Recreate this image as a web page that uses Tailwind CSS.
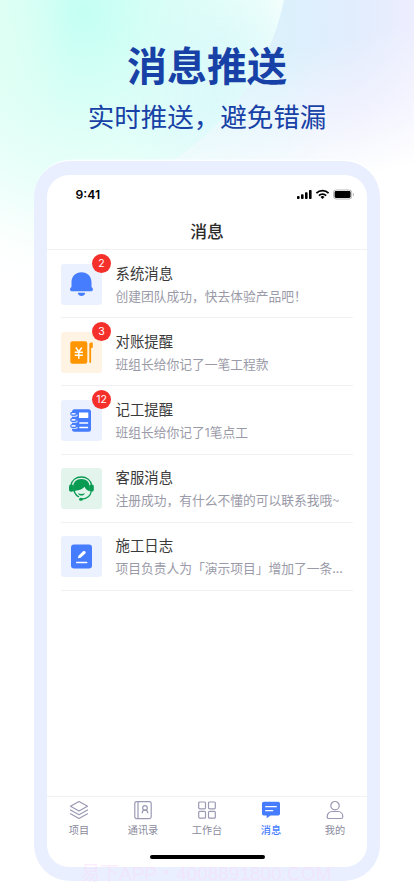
<!DOCTYPE html>
<html lang="zh-CN">
<head>
<meta charset="utf-8">
<title>消息推送</title>
<script src="https://cdn.jsdelivr.net/npm/@tailwindcss/browser@4"></script>
</head>
<body class="w-[414px] h-[896px] overflow-hidden bg-white font-['Noto_Sans_CJK_SC',sans-serif]">
<div class="relative isolate w-[414px] h-[896px] overflow-hidden flex flex-col items-center">
  <!-- Background gradients -->
  <svg class="absolute inset-0 -z-10" width="414" height="896" viewBox="0 0 414 896">
    <defs>
      <radialGradient id="mint" gradientUnits="userSpaceOnUse" cx="0" cy="0" r="1" gradientTransform="translate(84 12) scale(260 290)">
        <stop offset="0" stop-color="#c4fff4"/><stop offset=".35" stop-color="#dbfff6"/><stop offset=".7" stop-color="#f0fffb"/><stop offset="1" stop-color="#ffffff" stop-opacity="0"/>
      </radialGradient>
      <radialGradient id="left" gradientUnits="userSpaceOnUse" cx="0" cy="0" r="1" gradientTransform="translate(0 40) scale(70 130)">
        <stop offset="0" stop-color="#e0fff2" stop-opacity=".7"/><stop offset="1" stop-color="#e6fff4" stop-opacity="0"/>
      </radialGradient>
      <linearGradient id="sky" x1="0" y1="0" x2="1" y2="0">
        <stop offset="0" stop-color="#ddf9fa"/><stop offset=".5" stop-color="#d9effc"/><stop offset=".75" stop-color="#deebfd"/><stop offset="1" stop-color="#ebecfe"/>
      </linearGradient>
      <linearGradient id="fade" gradientUnits="userSpaceOnUse" x1="0" y1="0" x2="60" y2="250">
        <stop offset="0" stop-color="#fff" stop-opacity=".1"/><stop offset=".45" stop-color="#fff" stop-opacity=".08"/><stop offset=".75" stop-color="#fff" stop-opacity=".5"/><stop offset="1" stop-color="#fff"/>
      </linearGradient>
      <radialGradient id="lilac" gradientUnits="userSpaceOnUse" cx="362" cy="125" r="85">
        <stop offset="0" stop-color="#e4e3fd" stop-opacity=".8"/><stop offset="1" stop-color="#e8e6fd" stop-opacity="0"/>
      </radialGradient>
    </defs>
    <rect width="414" height="896" fill="#fff"/>
    <rect width="414" height="340" fill="url(#mint)"/>
    <rect width="414" height="340" fill="url(#left)"/>
    <rect x="160" y="10" width="120" height="150" fill="#d6f7fb" opacity=".65" style="filter:blur(26px)"/>
    <path d="M284 0C270 70 225 128 165 165V380H414V0Z" fill="url(#sky)"/>
    <rect x="270" y="30" width="144" height="200" fill="url(#lilac)"/>
    <path d="M284 0C270 70 225 128 165 165V381H415V0Z" fill="url(#fade)"/>
  </svg>

  <h1 class="mt-[33.5px] h-[60px] leading-[60px] text-[40px] font-bold text-[#1741a6]">消息推送</h1>
  <p class="h-[44px] leading-[44px] text-[26.5px] text-[#1741a6]">实时推送，避免错漏</p>

  <main class="mt-[23.5px] w-[346px] h-[720px] rounded-[36px] bg-[#e9effe] p-[13px] pt-[14px] shadow-[1px_-1px_0_0.5px_#ffffffcc]">
    <div class="w-[320px] h-[692px] rounded-[22px] bg-white overflow-hidden flex flex-col">
      <!-- Status bar -->
      <div class="h-[38px] shrink-0 flex items-center justify-between pl-[28.5px] pr-[12px]">
        <span class="font-['Inter',sans-serif] font-semibold text-[12.2px] leading-none pt-[3px]">9:41</span>
        <svg class="mt-px" width="58" height="12" viewBox="0 0 58 12">
          <g><rect x="0" y="7" width="2.6" height="3" rx=".8"/><rect x="4" y="5.2" width="2.6" height="4.8" rx=".8"/><rect x="8" y="3.2" width="2.6" height="6.8" rx=".8"/><rect x="12" y="1" width="2.6" height="9" rx=".8"/></g>
          <g fill="none" stroke="#000" stroke-width="1.8"><path d="M19.4 4.2a8.6 8.6 0 0 1 12.2 0"/><path d="M21.9 6.6a5.100 5.100 0 0 1 7.200 0"/></g>
          <path d="M25.5 10l-2-2a2.900 2.900 0 0 1 4 0Z"/>
          <rect x="36.500" y="1" width="18.200" height="9" rx="2.600" fill="#fff" stroke="#b8b8b8"/><rect x="37.600" y="2.100" width="16" height="6.800" rx="1.400"/><path d="M56 4v3c1.200-.4 1.200-2.600 0-3Z" fill="#aaa"/>
        </svg>
      </div>
      <header class="h-[37px] shrink-0 border-b border-[#f1f1f3] text-center text-[16.800px] font-medium text-[#2b2b2b] leading-[37px]">消息</header>

      <ul class="px-[14px] flex-1">
        <li class="h-[68.200px] border-b border-[#f1f1f3] flex items-center pt-px">
          <div class="relative w-[41px] h-[41px] rounded-[3px] bg-[#ebf1ff]">
            <svg width="41" height="41" viewBox="0 0 41 41" fill="#467dff"><path d="M20.500 8.200c-6 0-10 4.300-10 10v4.200c0 .5-.2.800-.6 1.100-.7.600-.9 1.300-.8 2.200.1.900.8 1.500 1.800 1.500h19.200c1 0 1.700-.6 1.800-1.500.1-.9-.1-1.600-.8-2.200-.4-.3-.6-.6-.6-1.100V18.200c0-5.700-4-10-10-10Z"/><path d="M16.800 28.800h7.400c0 1.900-1.500 3.200-3.700 3.200s-3.700-1.300-3.700-3.200Z"/></svg>
            <span class="absolute left-[31px] -top-[10px] w-[19px] h-[19px] rounded-full bg-[#f5302b] text-white text-[10.500px] leading-[19px] text-center font-['Inter',sans-serif]">2</span>
          </div>
          <div class="ml-[13.500px] flex-1 min-w-0"><h2 class="text-[14.400px] leading-[22px] text-[#3a3a3a]">系统消息</h2><p class="mt-px text-[12.750px] leading-[22px] text-[#9a9aa8] whitespace-nowrap">创建团队成功，快去体验产品吧！</p></div>
        </li>
        <li class="h-[68.200px] border-b border-[#f1f1f3] flex items-center pt-px">
          <div class="relative w-[41px] h-[41px] rounded-[3px] bg-[#fff3e4]">
            <svg width="41" height="41" viewBox="0 0 41 41"><rect x="9.300" y="9.200" width="17" height="22.500" rx="2.200" fill="#ff9500"/><path d="M28.300 12.200q0-1.800 1.800-1.800h1.700v4.700q0 .8-.9.800h-.8v14.200q0 1-.9 1t-.9-1Z" fill="#ff9500"/><path d="M14.800 15.500l3 4.200 3-4.200M13.700 20.200h8.200M13.700 23.200h8.200M17.800 20v6.800" fill="none" stroke="#fff" stroke-width="1.500"/></svg>
            <span class="absolute left-[31px] -top-[10px] w-[19px] h-[19px] rounded-full bg-[#f5302b] text-white text-[10.500px] leading-[19px] text-center font-['Inter',sans-serif]">3</span>
          </div>
          <div class="ml-[13.500px] flex-1 min-w-0"><h2 class="text-[14.400px] leading-[22px] text-[#3a3a3a]">对账提醒</h2><p class="mt-px text-[12.750px] leading-[22px] text-[#9a9aa8] whitespace-nowrap">班组长给你记了一笔工程款</p></div>
        </li>
        <li class="h-[68.200px] border-b border-[#f1f1f3] flex items-center pt-[1.500px]">
          <div class="relative w-[41px] h-[41px] rounded-[3px] bg-[#ebf1ff]">
            <svg width="41" height="41" viewBox="0 0 41 41"><rect x="11" y="9.300" width="19" height="22.500" rx="2.500" fill="#467dff"/><path d="M18 12.500h9.300v5.500H18ZM18.300 22.200h8.800v1.500h-8.800ZM18.300 26.700h8.800v1.500h-8.800Z" fill="#fff"/><path d="M10.600 16.100h4.200q1.400-.1 1.400-1.400M10.600 22.200h4.200q1.400-.1 1.400-1.400M10.600 28.300h4.200q1.400-.1 1.400-1.400" fill="none" stroke="#ebf1ff" stroke-width="1.100"/><g fill="#ebf1ff" stroke="#467dff" stroke-width="1.200"><rect x="9.800" y="12.300" width="5.500" height="2.900" rx="1.450"/><rect x="9.800" y="18.400" width="5.500" height="2.900" rx="1.450"/><rect x="9.800" y="24.500" width="5.500" height="2.900" rx="1.450"/></g></svg>
            <span class="absolute left-[31px] -top-[10px] w-[19px] h-[19px] rounded-full bg-[#f5302b] text-white text-[10.500px] leading-[19px] text-center font-['Inter',sans-serif]">12</span>
          </div>
          <div class="ml-[13.500px] flex-1 min-w-0"><h2 class="text-[14.400px] leading-[22px] text-[#3a3a3a]">记工提醒</h2><p class="mt-px text-[12.750px] leading-[22px] text-[#9a9aa8] whitespace-nowrap">班组长给你记了<span class="font-['Inter',sans-serif] text-[12px]">1</span>笔点工</p></div>
        </li>
        <li class="h-[68.200px] border-b border-[#f1f1f3] flex items-center pt-px">
          <div class="w-[41px] h-[41px] rounded-[3px] bg-[#e3f4ec]">
            <svg width="41" height="41" viewBox="0 0 41 41" fill="#0a9b52"><path d="M9.900 17.500C10.800 12.200 14.900 9 20.300 9s9.500 3.200 10.400 8.500" fill="none" stroke="#0a9b52" stroke-width="1.300"/><path d="M12.200 23.500V18.600c0-4.500 3.400-7.600 8.200-7.600s8.200 3.100 8.200 7.600v4.700c-2.600-.8-4.300-2.400-5-4.600-1.900 2.300-5 3.700-9.300 4-.2.800-.8 1.200-2.100.8Z"/><rect x="8" y="16.500" width="4.600" height="7.300" rx="2"/><rect x="28.200" y="16.500" width="4.600" height="7.300" rx="2"/><path d="M12.900 22c.8 3.500 2.700 5.800 5.100 6.900M30.300 23.300c-.8 4.300-4 7.300-9.300 7.800" fill="none" stroke="#0a9b52" stroke-width="1.200"/><path d="M17 25.200c2 1 4.800 1 6.800 0-.7 3.200-6.100 3.200-6.800 0Z"/><ellipse cx="20" cy="31.200" rx="2" ry="1.500"/></svg>
          </div>
          <div class="ml-[13.500px] flex-1 min-w-0"><h2 class="text-[14.400px] leading-[22px] text-[#3a3a3a]">客服消息</h2><p class="mt-px text-[12.750px] leading-[22px] text-[#9a9aa8] whitespace-nowrap">注册成功，有什么不懂的可以联系我哦~</p></div>
        </li>
        <li class="h-[68.200px] border-b border-[#f1f1f3] flex items-center pt-px">
          <div class="w-[41px] h-[41px] rounded-[3px] bg-[#ebf1ff]">
            <svg width="41" height="41" viewBox="0 0 41 41"><rect x="10" y="8.500" width="21" height="24" rx="3" fill="#467dff"/><path d="M15.700 26.500h10" stroke="#fff" stroke-width="1.500" stroke-linecap="round"/><path d="M16.900 22.200l.6-2.500 4.600-4.400c1.500-1.200 3.500.7 2.200 2.200l-4.700 4.200-2.700.5Z" fill="#fff"/></svg>
          </div>
          <div class="ml-[13.500px] flex-1 min-w-0"><h2 class="text-[14.400px] leading-[22px] text-[#3a3a3a]">施工日志</h2><p class="mt-px text-[12.750px] leading-[22px] text-[#9a9aa8] whitespace-nowrap">项目负责人为「演示项目」增加了一条...</p></div>
        </li>
      </ul>

      <nav class="h-[71px] shrink-0 border-t border-[#f1f1f3] flex flex-col items-center">
        <div class="w-full grid grid-cols-5 text-[10.200px] leading-[19px] text-[#8a8a9c]">
          <a class="flex flex-col items-center pt-[3px]"><svg width="20" height="20" viewBox="0 0 20 20" fill="none" stroke="#9b99b3" stroke-width="1.200" stroke-linejoin="round" stroke-linecap="round"><path d="M10 1.500l8.500 4.700L10 11 1.500 6.200ZM1.500 10l8.500 4.700 8.500-4.700M1.500 13.800l8.500 4.700 8.500-4.700"/></svg>项目</a>
          <a class="flex flex-col items-center pt-[3px]"><svg width="20" height="20" viewBox="0 0 20 20" fill="none" stroke="#9b99b3" stroke-width="1.200"><rect x="1.800" y="1.600" width="16.400" height="17" rx="1.800"/><path d="M5 1.600v17M9.200 13.200c0-2 1-3 2.800-3s2.800 1 2.800 3"/><circle cx="12" cy="7.900" r="2.300"/></svg>通讯录</a>
          <a class="flex flex-col items-center pt-[3px]"><svg width="20" height="20" viewBox="0 0 20 20" fill="none" stroke="#9b99b3" stroke-width="1.200"><rect x="1.700" y="2" width="6.800" height="6.800" rx="1"/><rect x="11.500" y="2" width="6.800" height="6.800" rx="1"/><rect x="1.700" y="11.400" width="6.800" height="6.800" rx="1"/><rect x="11.500" y="11.400" width="6.800" height="6.800" rx="1"/></svg>工作台</a>
          <a class="flex flex-col items-center pt-[3px] text-[#467dff] font-medium"><svg width="20" height="20" viewBox="0 0 20 20"><path d="M2.800 1.800h14.400q1.800 0 1.800 1.800v10.200q0 1.800-1.800 1.800H9.500L5.700 18.300v-2.700H2.800Q1 15.600 1 13.800V3.600q0-1.800 1.800-1.800Z" fill="#467dff"/><path d="M4.700 6.700h10.600M4.700 10.700h7" stroke="#fff" stroke-width="1.300" stroke-linecap="round"/></svg>消息</a>
          <a class="flex flex-col items-center pt-[3px]"><svg width="20" height="20" viewBox="0 0 20 20" fill="none" stroke="#9b99b3" stroke-width="1.200"><circle cx="10" cy="5.700" r="4.200"/><path d="M7 11.500h6c3 0 4.800 2.500 4.800 5.200 0 1.200-.5 1.800-1.700 1.800H3.900c-1.200 0-1.700-.6-1.700-1.800 0-2.700 1.800-5.200 4.800-5.200Z"/></svg>我的</a>
        </div>
        <div class="mt-[16px] w-[115px] h-[4px] rounded-full bg-black"></div>
      </nav>
    </div>
  </main>
  <!-- Faint site mark over the phone's lower edge -->
  <div class="absolute left-[81px] top-[864px] h-[20px] leading-[20px] text-[19px] text-[#f8dcfb]/50 whitespace-nowrap font-['Liberation_Sans','Noto_Sans_CJK_SC',sans-serif]">易下APP・4008891800.COM</div>
</div>
</body>
</html>
